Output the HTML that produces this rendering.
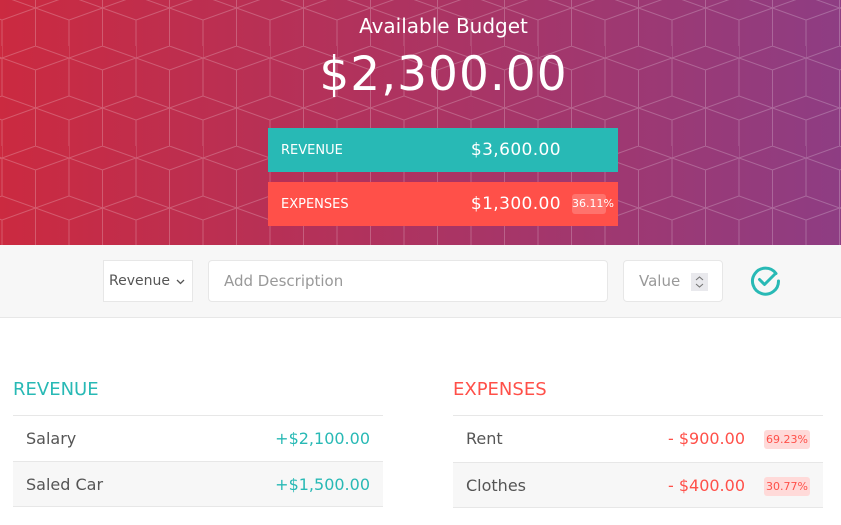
<!DOCTYPE html>
<html><head><style>
*{margin:0;padding:0;box-sizing:border-box}
body{width:841px;height:525px;overflow:hidden;background:#fff;font-family:"DejaVu Sans","Liberation Sans",sans-serif;position:relative}
.hdr{position:absolute;left:0;top:0;width:841px;height:245px;background:linear-gradient(90deg,#cb2a40,#8e3d83)}
.hdr svg{position:absolute;left:0;top:0}
.t1{position:absolute;top:14px;left:46px;width:795px;text-align:center;color:#fff;font-size:20px}
.t2{position:absolute;top:47px;left:46px;width:795px;text-align:center;color:#fff;font-size:47px;letter-spacing:1px}
.bar{position:absolute;left:268px;width:350px;height:44px;color:#fff}
.bar .l{position:absolute;left:13px;top:15px;font-size:13px}
.bar .v{position:absolute;right:57px;top:12px;font-size:17px;letter-spacing:0.4px}
.bar .b{position:absolute;left:304px;top:12px;width:34px;height:20px;background:rgba(255,255,255,.2);border-radius:3px;font-size:11px;line-height:20px;text-align:center}
.inp{position:absolute;top:245px;left:0;width:841px;height:73px;background:#f7f7f7;border-bottom:1px solid #e7e7e7}
.box{position:absolute;background:#fff;border:1px solid #e7e7e7;color:#999;font-size:15px}
.h{position:absolute;top:379px;font-size:18px}
.row{position:absolute;width:370px;height:46px;border-top:1px solid #e7e7e7;font-size:16px;color:#555}
.row .n{position:absolute;left:13px;top:13px}
.row .a{position:absolute;top:13px}
.pc{position:absolute;right:13px;top:14px;background:#ffdad9;color:#ff5049;font-size:11px;border-radius:3px;padding:3px 2px;}
</style></head><body>
<div class="hdr">
<svg width="841" height="245"><defs><pattern id="p" width="67" height="100" patternUnits="userSpaceOnUse" patternTransform="translate(2,46)">
<path d="M33.5,0L67,12L67,50L33.5,62L0,50L0,12ZM0,12L33.5,24L67,12M33.5,24L33.5,62M33.5,62L33.5,100M0,0L0,12M0,74L33.5,62M67,74L33.5,62M0,74L0,100M67,74L67,100M0,74L-33.5,62M67,74L100.5,62" fill="none" stroke="rgba(255,255,255,0.22)" stroke-width="1"/></pattern></defs><rect width="841" height="245" fill="url(#p)"/></svg>
<div class="t1">Available Budget</div>
<div class="t2">$2,300.00</div>
<div class="bar" style="top:128px;background:#28b9b5"><span class="l">REVENUE</span><span class="v">$3,600.00</span></div>
<div class="bar" style="top:182px;background:#ff5049"><span class="l">EXPENSES</span><span class="v">$1,300.00</span><span class="b">36.11%</span></div>
</div>
<div class="inp">
<div class="box" style="left:103px;top:15px;width:90px;height:42px;border-radius:0;color:#555;font-size:14px;padding:12px 0 0 5px">Revenue<svg style="position:absolute;right:7px;top:18px" width="9" height="6"><path d="M1,1L4.5,4.5L8,1" fill="none" stroke="#555" stroke-width="1.3"/></svg></div>
<div class="box" style="left:208px;top:15px;width:400px;height:42px;border-radius:4px;padding:11px 0 0 15px">Add Description</div>
<div class="box" style="left:623px;top:15px;width:100px;height:42px;border-radius:4px;padding:11px 0 0 15px">Value<svg style="position:absolute;left:67px;top:12px" width="17" height="18"><rect width="17" height="18" fill="#e9e9ed"/><path d="M5,7L8.5,4L12,7M5,11L8.5,14L12,11" fill="none" stroke="#777" stroke-width="1.1"/></svg></div>
<svg style="position:absolute;left:750px;top:19px" width="32" height="32" viewBox="0 0 32 32"><path d="M26,9.5A13,13 0 1 0 28.5,17" fill="none" stroke="#28b9b5" stroke-width="3" stroke-linecap="round"/><path d="M9.5,15.5L14.5,20.5L25.5,9.5" fill="none" stroke="#28b9b5" stroke-width="3" stroke-linecap="round" stroke-linejoin="round"/></svg>
</div>
<div class="h" style="left:13px;color:#28b9b5">REVENUE</div>
<div class="row" style="left:13px;top:415px"><span class="n">Salary</span><span class="a" style="right:13px;color:#28b9b5">+$2,100.00</span></div>
<div class="row" style="left:13px;top:461px;background:#f7f7f7;border-bottom:1px solid #e7e7e7"><span class="n">Saled Car</span><span class="a" style="right:13px;color:#28b9b5">+$1,500.00</span></div>
<div class="h" style="left:453px;color:#ff5049">EXPENSES</div>
<div class="row" style="left:453px;top:415px"><span class="n">Rent</span><span class="a" style="right:78px;color:#ff5049">- $900.00</span><span class="pc">69.23%</span></div>
<div class="row" style="left:453px;top:462px;background:#f7f7f7;border-bottom:1px solid #e7e7e7"><span class="n">Clothes</span><span class="a" style="right:78px;color:#ff5049">- $400.00</span><span class="pc">30.77%</span></div>
</body></html>
